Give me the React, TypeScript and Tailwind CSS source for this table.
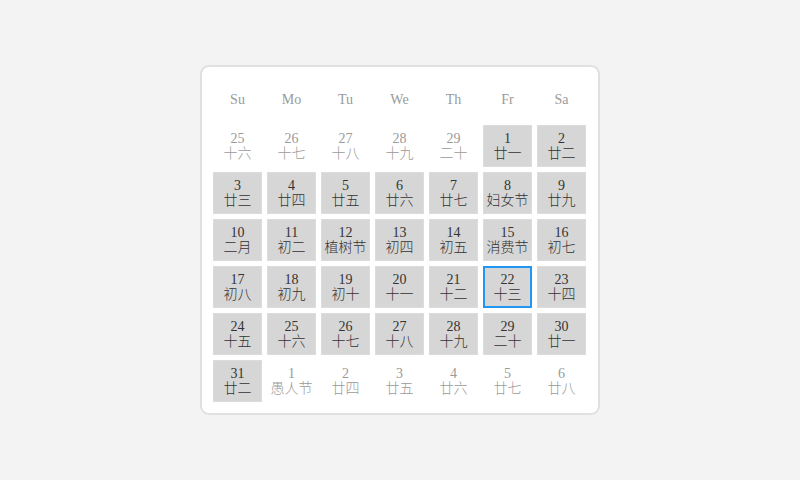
import React from "react";

type Day = { day: number; lunar: string; current: boolean; selected?: boolean };

const weekdays = ["Su", "Mo", "Tu", "We", "Th", "Fr", "Sa"];

const prevMonth: Day[] = [
  { day: 25, lunar: "十六", current: false },
  { day: 26, lunar: "十七", current: false },
  { day: 27, lunar: "十八", current: false },
  { day: 28, lunar: "十九", current: false },
  { day: 29, lunar: "二十", current: false },
];

const lunarMarch = [
  "廿一", "廿二", "廿三", "廿四", "廿五", "廿六", "廿七", "妇女节", "廿九", "二月",
  "初二", "植树节", "初四", "初五", "消费节", "初七", "初八", "初九", "初十", "十一",
  "十二", "十三", "十四", "十五", "十六", "十七", "十八", "十九", "二十", "廿一",
  "廿二",
];

const thisMonth: Day[] = lunarMarch.map((lunar, i) => ({
  day: i + 1,
  lunar,
  current: true,
  selected: i + 1 === 22,
}));

const nextMonth: Day[] = [
  { day: 1, lunar: "愚人节", current: false },
  { day: 2, lunar: "廿四", current: false },
  { day: 3, lunar: "廿五", current: false },
  { day: 4, lunar: "廿六", current: false },
  { day: 5, lunar: "廿七", current: false },
  { day: 6, lunar: "廿八", current: false },
];

const days = [...prevMonth, ...thisMonth, ...nextMonth];

function DayCell({ d }: { d: Day }) {
  if (!d.current) {
    return (
      <div className="flex h-[42px] flex-col items-center justify-center leading-[15px] text-[#9a9a9a]">
        <span>{d.day}</span>
        <span className="font-light">{d.lunar}</span>
      </div>
    );
  }

  const border = d.selected ? "border-2 border-[#2196f3]" : "border border-[#dcdcdc]";

  return (
    <div
      className={`flex h-[42px] flex-col items-center justify-center bg-[#d6d6d6] leading-[15px] text-[#333] ${border}`}
    >
      <span>{d.day}</span>
      <span className="font-light">{d.lunar}</span>
    </div>
  );
}

export default function App() {
  return (
    <div
      className="flex h-[480px] w-[800px] items-center justify-center bg-[#f3f3f3] text-[14px]"
      style={{ fontFamily: '"Liberation Serif", "Noto Sans CJK SC", serif' }}
    >
      <div className="w-[400px] rounded-[9px] border-2 border-[#e0e0e0] bg-white pb-[11px] pl-[11px] pr-[12px] pt-[11px]">
        <div className="grid grid-cols-[repeat(7,49px)] gap-[5px]">
          {weekdays.map((w) => (
            <div key={w} className="flex h-[42px] items-center justify-center text-[#9a9a9a]">
              {w}
            </div>
          ))}
          {days.map((d, i) => (
            <DayCell key={i} d={d} />
          ))}
        </div>
      </div>
    </div>
  );
}
